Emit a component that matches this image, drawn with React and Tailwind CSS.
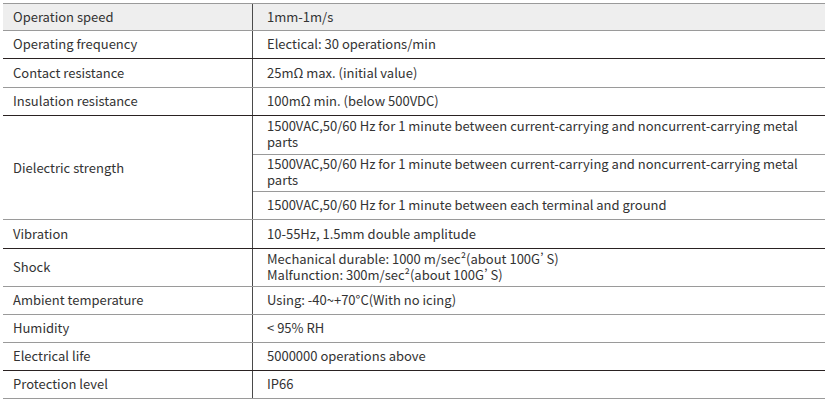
import React from 'react';

const GRAY = 'border-[#9a9a9a]';
const DARK = 'border-[#2a2222]';

const rows = [
  { label: 'Operation speed', value: '1mm-1m/s', h: 'h-[27px]', line: GRAY, head: true },
  { label: 'Operating frequency', value: 'Electical: 30 operations/min', h: 'h-[28px]', line: GRAY },
  { label: 'Contact resistance', value: '25mΩ max. (initial value)', h: 'h-[29px]', line: DARK },
  { label: 'Insulation resistance', value: '100mΩ min. (below 500VDC)', h: 'h-[28px]', line: GRAY },
];

const tail = [
  { label: 'Vibration', value: '10-55Hz, 1.5mm double amplitude', h: 'h-[29px]', line: GRAY },
  {
    label: 'Shock',
    value: (
      <div className="leading-[16px] whitespace-pre-line [font-variant-east-asian:proportional-width]">
        {'Mechanical durable: 1000 m/sec²(about 100G’ S)\nMalfunction: 300m/sec²(about 100G’ S)'}
      </div>
    ),
    h: 'h-[38px]',
    line: DARK,
  },
  { label: 'Ambient temperature', value: 'Using: -40~+70°C(With no icing)', h: 'h-[28px]', line: GRAY },
  { label: 'Humidity', value: '< 95% RH', h: 'h-[28px]', line: GRAY },
  { label: 'Electrical life', value: '5000000 operations above', h: 'h-[28px]', line: GRAY },
  { label: 'Protection level', value: 'IP66', h: 'h-[28px]', line: DARK },
];

const dielectric = [
  { text: '1500VAC,50/60 Hz for 1 minute between current-carrying and noncurrent-carrying metal parts', h: 'h-[38px]', line: '' },
  { text: '1500VAC,50/60 Hz for 1 minute between current-carrying and noncurrent-carrying metal parts', h: 'h-[38px]', line: GRAY },
  { text: '1500VAC,50/60 Hz for 1 minute between each terminal and ground', h: 'h-[28px]', line: GRAY },
];

function Row({ label, value, h, line, head }) {
  return (
    <div className={`flex border-t ${line} ${h} ${head ? 'bg-[#eeeeee]' : ''}`}>
      <div className="w-[250px] shrink-0 flex items-center pl-[10px] pb-[1px] border-r border-[#4a4a4a]">{label}</div>
      <div className="flex-1 flex items-center pl-[14px] pb-[1px]">{value}</div>
    </div>
  );
}

export default function App() {
  return (
    <div className="w-[829px] h-[401px] bg-white pt-[3px] pl-[3px]">
      <div
        className="w-[822px] text-[13px] text-[#333333] border-b border-[#9a9a9a]"
        style={{ fontFamily: '"Noto Sans CJK SC", "Noto Sans", sans-serif' }}
      >
        {rows.map((r) => (
          <Row key={r.label} {...r} />
        ))}
        <div className={`flex border-t ${DARK} h-[104px]`}>
          <div className="w-[250px] shrink-0 flex items-center pl-[10px] border-r border-[#4a4a4a]">Dielectric strength</div>
          <div className="flex-1 flex flex-col">
            {dielectric.map((d, i) => (
              <div key={i} className={`flex items-center pl-[14px] pr-[20px] pb-[1px] ${d.h} ${d.line ? `border-t ${d.line}` : ''}`}>
                <div className="leading-[16px]">{d.text}</div>
              </div>
            ))}
          </div>
        </div>
        {tail.map((r) => (
          <Row key={r.label} {...r} />
        ))}
      </div>
    </div>
  );
}
